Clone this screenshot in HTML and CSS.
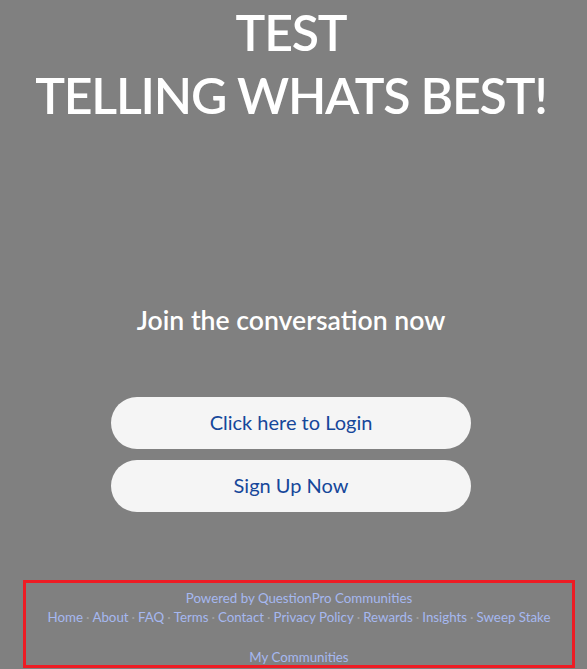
FILE: index.html
```html
<!DOCTYPE html>
<html lang="en">
<head>
<meta charset="utf-8">
<title>TEST TELLING WHATS BEST!</title>
<link rel="stylesheet" href="styles.css">
</head>
<body>
<main class="page">
  <header class="hero">
    <h1 class="title">TEST<br>TELLING WHATS BEST!</h1>
  </header>
  <section class="join">
    <h2 class="join-title">Join the conversation now</h2>
    <div class="actions">
      <a class="btn" href="#">Click here to Login</a>
      <a class="btn" href="#">Sign Up Now</a>
    </div>
  </section>
  <footer class="footer">
    <div class="powered"><a href="#">Powered by QuestionPro Communities</a></div>
    <nav class="links">
      <a href="#">Home</a><span class="sep">·</span><a href="#">About</a><span class="sep">·</span><a href="#">FAQ</a><span class="sep">·</span><a href="#">Terms</a><span class="sep">·</span><a href="#">Contact</a><span class="sep">·</span><a href="#">Privacy Policy</a><span class="sep">·</span><a href="#">Rewards</a><span class="sep">·</span><a href="#">Insights</a><span class="sep">·</span><a href="#">Sweep Stake</a>
    </nav>
    <div class="mine"><a href="#">My Communities</a></div>
  </footer>
</main>
</body>
</html>
```
FILE: styles.css
```css
html, body {
  margin: 0;
  padding: 0;
  background: #808080;
  font-family: "Lato", "Open Sans", sans-serif;
}
.page {
  width: 582px;
  min-height: 669px;
}
.hero {
  padding-top: 1px;
}
.title {
  margin: 0;
  text-align: center;
  color: #ffffff;
  font-size: 50px;
  font-weight: 600;
  line-height: 63px;
  letter-spacing: -1.2px;
}
.join {
  padding-top: 178px;
}
.join-title {
  margin: 0;
  text-align: center;
  color: #ffffff;
  font-size: 26.6px;
  font-weight: 600;
  line-height: 30px;
}
.actions {
  margin: 62px auto 0;
  width: 360px;
  display: flex;
  flex-direction: column;
  gap: 11px;
}
.btn {
  display: flex;
  align-items: center;
  justify-content: center;
  height: 52px;
  box-sizing: border-box;
  padding-bottom: 3px;
  border-radius: 26px;
  background: #f5f5f5;
  color: #15479a;
  font-size: 20px;
  text-decoration: none;
}
.footer {
  margin: 68px 0 0 23px;
  width: 552px;
  height: 88px;
  box-sizing: border-box;
  border: 3px solid #ee1c24;
  padding-top: 6px;
  text-align: center;
  font-size: 13.3px;
  line-height: 19px;
}
.footer a {
  color: #a6b8f0;
  text-decoration: none;
}
.sep {
  color: #a0a0a0;
  padding: 0 3px;
}
.mine {
  margin-top: 21px;
}
```
